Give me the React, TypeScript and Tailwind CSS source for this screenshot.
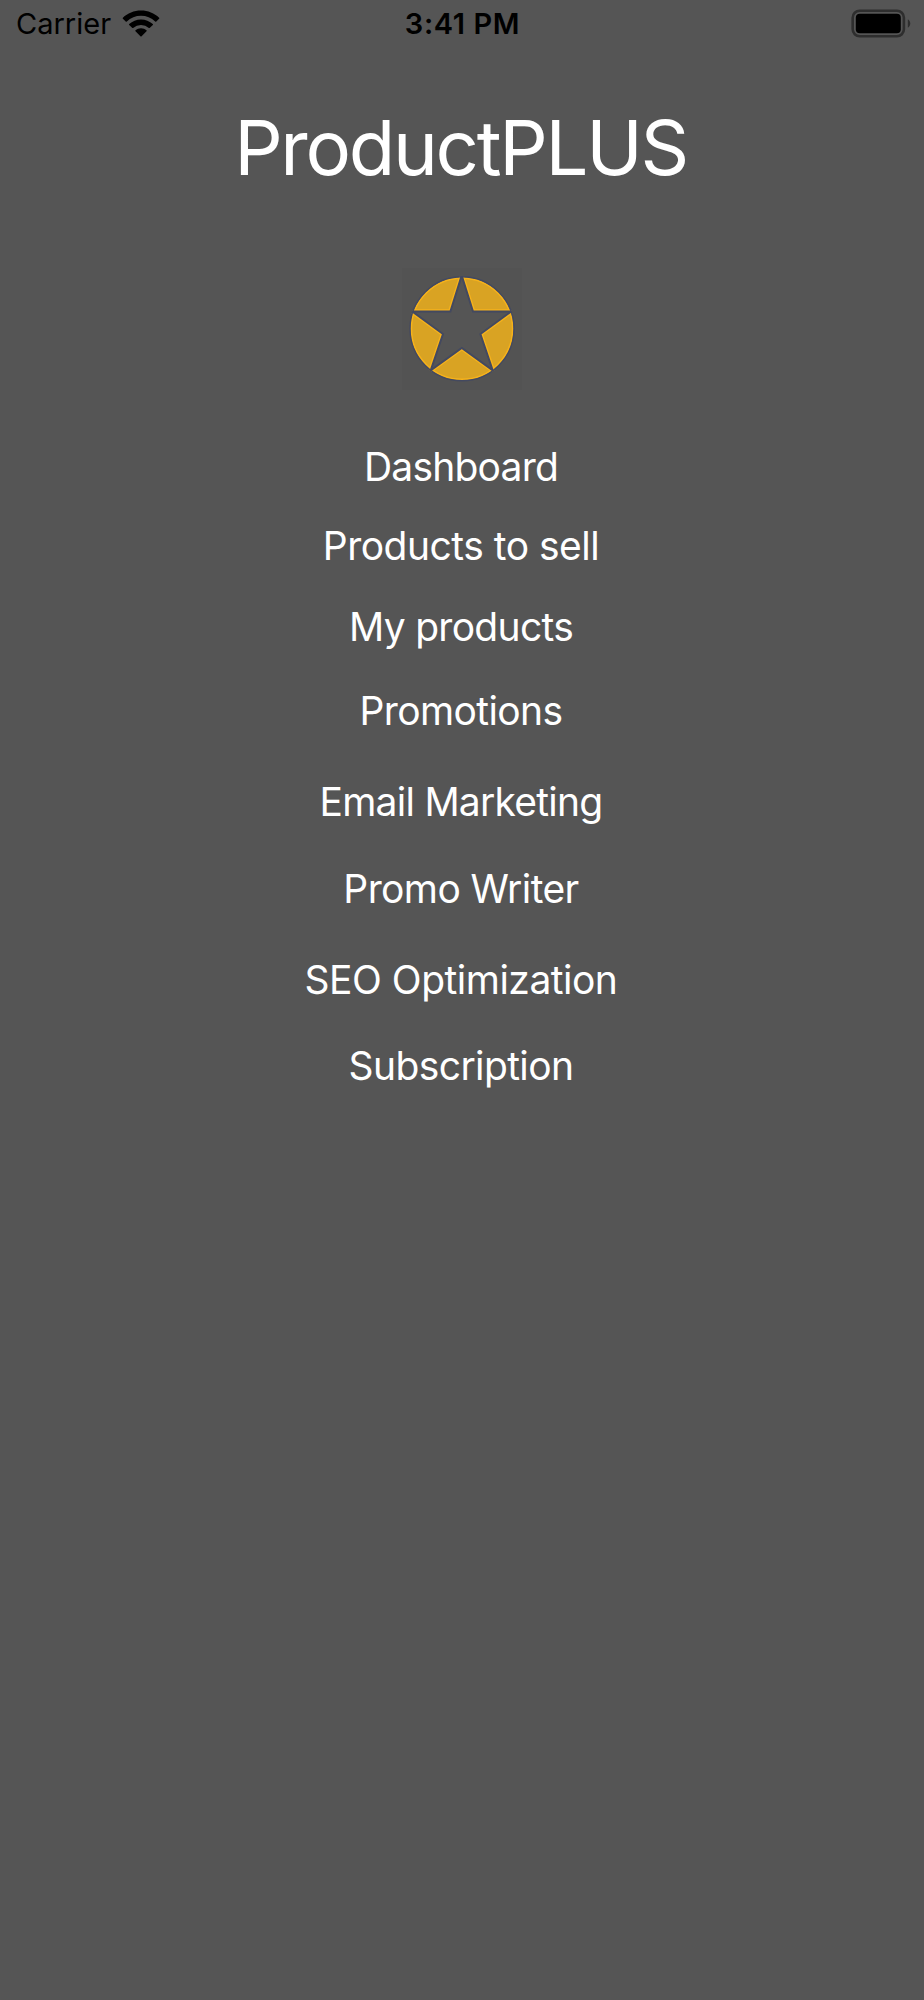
interface MenuItem {
  label: string;
  className: string;
}

const menuItems: MenuItem[] = [
  { label: "Dashboard", className: "tracking-[-0.8px]" },
  { label: "Products to sell", className: "mt-[31px] tracking-[-0.5px]" },
  { label: "My products", className: "mt-[33px] tracking-[-0.7px]" },
  { label: "Promotions", className: "mt-[36px] tracking-[-0.6px]" },
  { label: "Email Marketing", className: "mt-[43px] tracking-[-0.75px]" },
  { label: "Promo Writer", className: "mt-[39px] tracking-[-0.6px]" },
  { label: "SEO Optimization", className: "mt-[43px] tracking-[-0.5px]" },
  { label: "Subscription", className: "mt-[38px] tracking-[-0.6px]" },
];

function WifiIcon() {
  return (
    <svg width="38" height="28" viewBox="0 0 38 28" className="ml-[11px] shrink-0">
      <path d="M19 0.5C26 0.5 32.4 3.2 37.1 7.7Q37.6 8.2 37.1 8.7L34.3 11.5Q33.8 12 33.2 11.5A20.5 20.5 0 0 0 4.8 11.5Q4.2 12 3.7 11.5L0.9 8.7Q0.4 8.2 0.9 7.7C5.6 3.2 12 0.5 19 0.5Z" />
      <path d="M19 9.4C23.5 9.4 27.6 11.1 30.8 14Q31.3 14.5 30.8 15L27.9 17.8Q27.4 18.3 26.9 17.9A11.9 11.9 0 0 0 11.1 17.9Q10.6 18.3 10.1 17.8L7.2 15Q6.7 14.5 7.2 14C10.4 11.1 14.5 9.4 19 9.4Z" />
      <path d="M19 18.2C21.1 18.2 23 19 24.5 20.3Q25 20.8 24.5 21.3L19.6 26.3Q19 26.9 18.4 26.3L13.5 21.3Q13 20.8 13.5 20.3C15 19 16.9 18.2 19 18.2Z" />
    </svg>
  );
}

function BatteryIcon() {
  return (
    <svg width="60" height="29" viewBox="0 0 60 29" className="shrink-0">
      <rect x="1.7" y="1.7" width="51.2" height="25.6" rx="7" fill="none" stroke="#2e2e2e" strokeWidth="2.6" />
      <rect x="4.8" y="4.8" width="45" height="19.5" rx="4" />
      <path d="M56.8 10.2a5 5 0 0 1 0 8.6z" fill="#2e2e2e" />
    </svg>
  );
}

function StatusBar() {
  return (
    <header className="grid h-[47px] grid-cols-3 items-center text-black">
      <div className="flex items-center pl-[16px]">
        <span className="text-[29px] leading-[47px]">Carrier</span>
        <WifiIcon />
      </div>
      <span className="pl-px text-center text-[29px] leading-[47px] font-semibold tracking-[0.6px]">3:41 PM</span>
      <div className="flex justify-end pr-[13px] pb-[1px]">
        <BatteryIcon />
      </div>
    </header>
  );
}

const STAR = "59.7,7.5 71,43.5 109.2,43.5 78.4,66 90.7,102.3 59.8,80 28.7,102.3 41,66 10.3,43.5 48.4,43.5";

function Logo() {
  return (
    <svg width="120" height="122" viewBox="0 0 120 122" className="bg-[#535353]">
      <defs>
        <clipPath id="disc">
          <circle cx="60" cy="60.8" r="52.6" />
        </clipPath>
      </defs>
      <circle cx="60" cy="60.8" r="51.6" fill="#d9a323" />
      <g clipPath="url(#disc)">
        <circle cx="60" cy="60.8" r="50.6" fill="none" stroke="#f6b21b" strokeWidth="1.6" />
        <polygon points={STAR} fill="none" stroke="#f6b21b" strokeWidth="4.6" />
        <polygon points={STAR} fill="#555555" stroke="#434960" strokeWidth="2" />
      </g>
      <circle cx="60" cy="60.8" r="52" fill="none" stroke="#434960" strokeWidth="1.4" />
    </svg>
  );
}

export default function App() {
  return (
    <div className="flex min-h-[2000px] w-full flex-col bg-[#555555] font-['Inter','Liberation_Sans',sans-serif] text-white">
      <StatusBar />
      <main className="flex flex-col items-center">
        <h1 className="mt-[52px] pr-[3px] text-[76px] leading-[96px] tracking-[-2.3px]">ProductPLUS</h1>
        <div className="mt-[73px]">
          <Logo />
        </div>
        <nav className="mt-[53px] flex flex-col items-center pr-[2px]">
          {menuItems.map((item) => (
            <a key={item.label} className={`text-[39px] leading-[48px] ${item.className}`}>
              {item.label}
            </a>
          ))}
        </nav>
      </main>
    </div>
  );
}
